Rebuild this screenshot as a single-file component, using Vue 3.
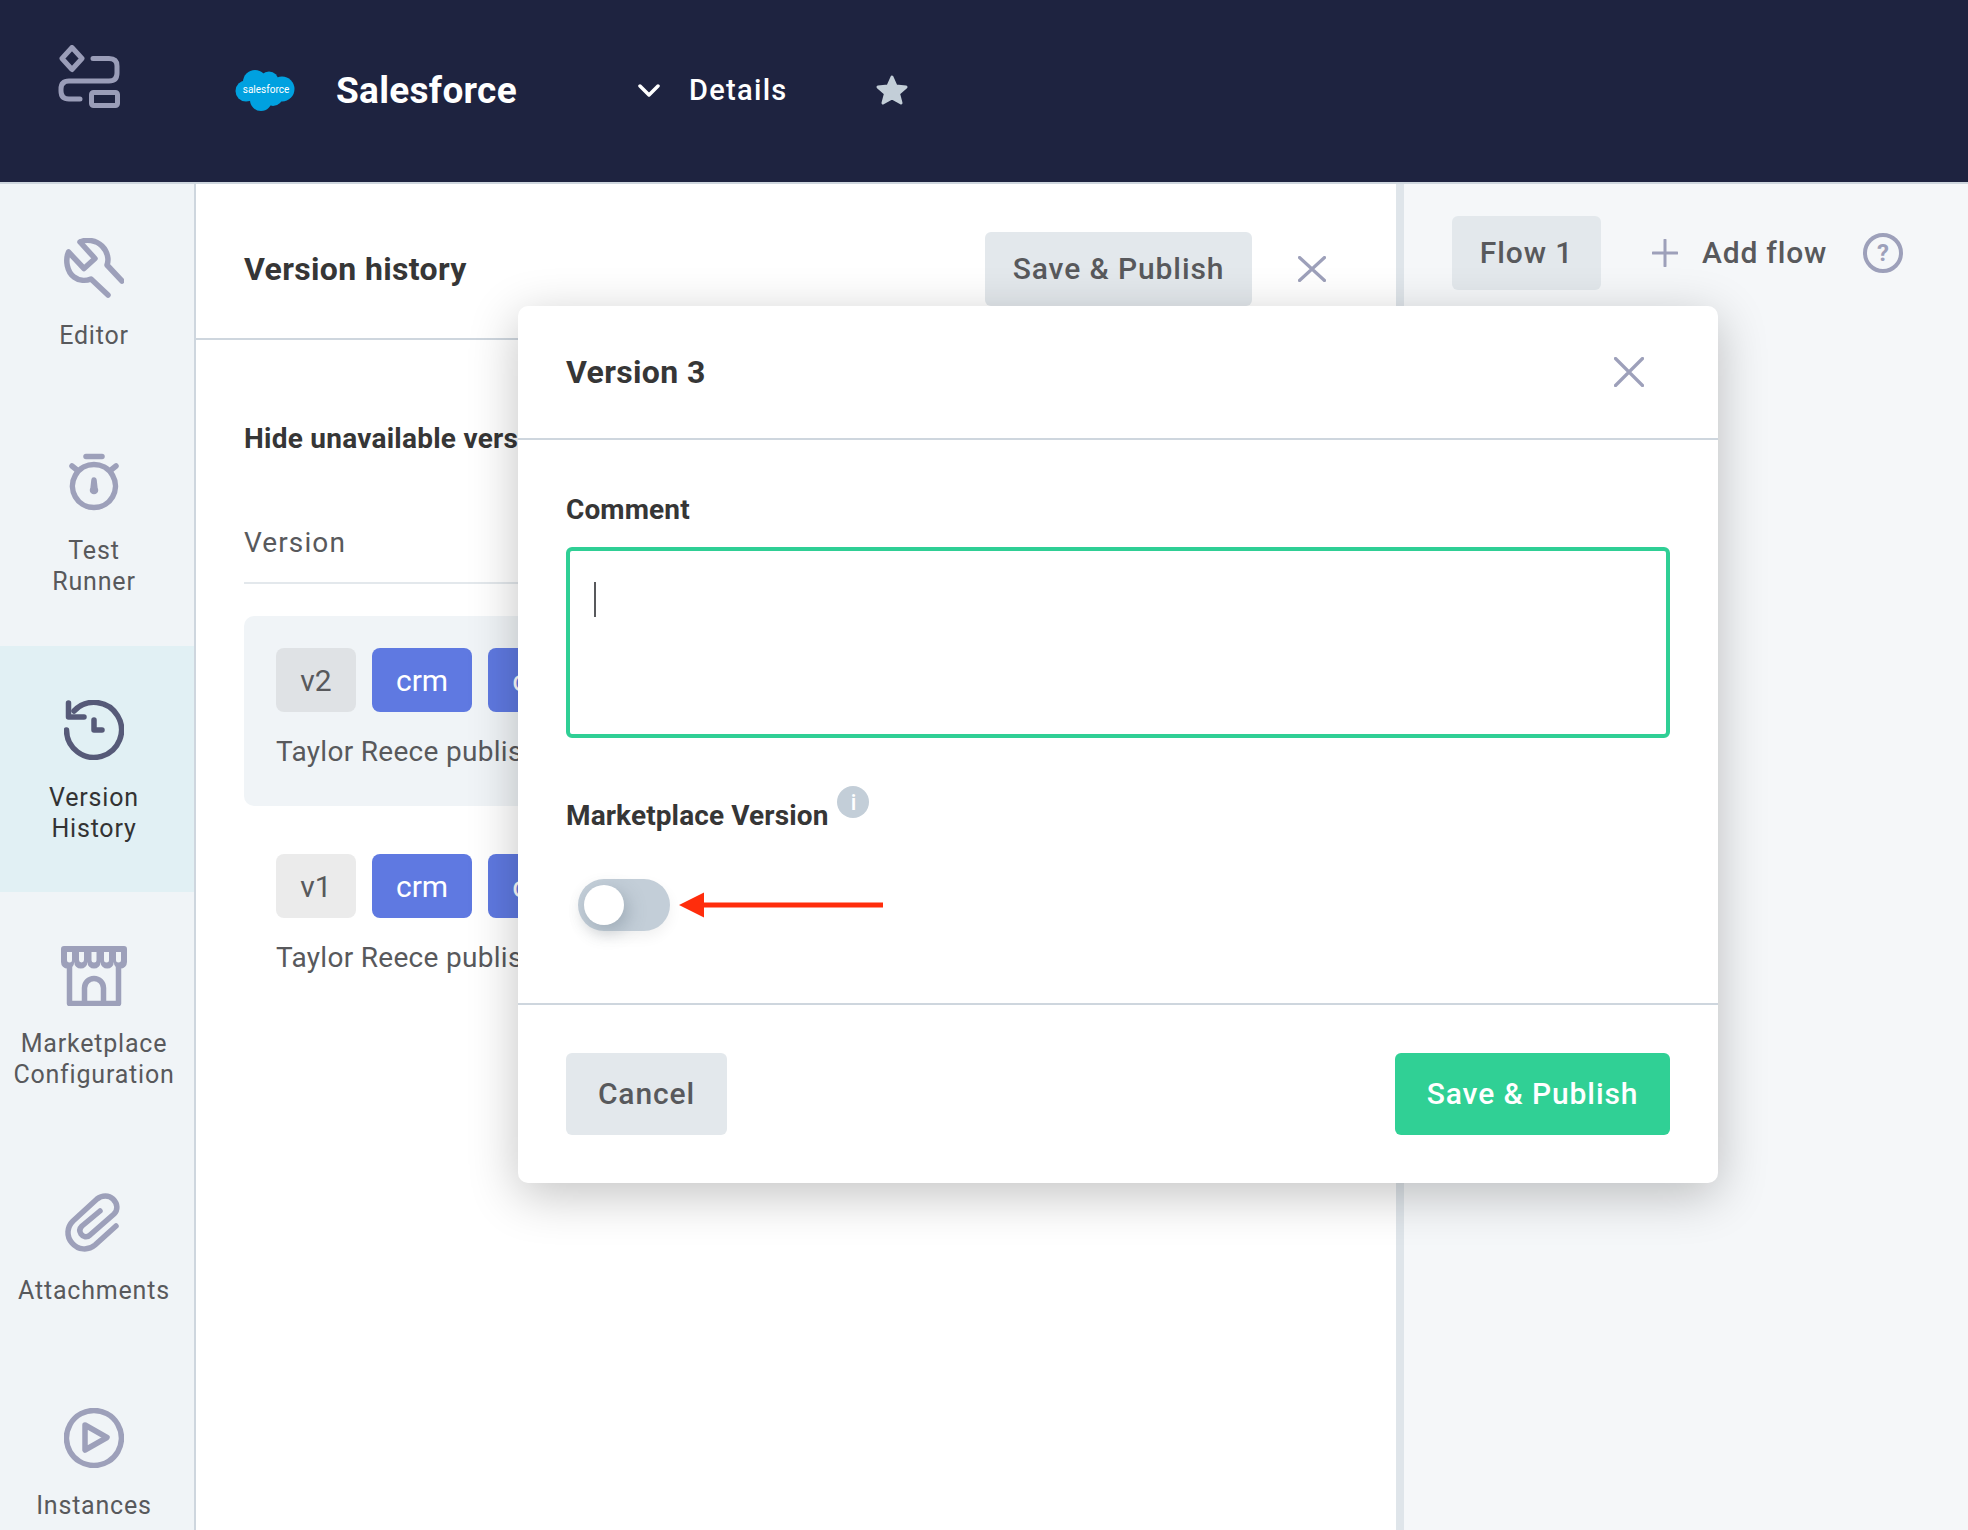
<script setup>
const navItems = [
  {
    lines: ['Editor'],
    paths: ['M16 4 L31 20.5 L20 30.5 L4.5 14 C1 22 3 34 10 39 C15 43 22 43 27 41 L44 57 M16 4 C22 1 32 2 38 8 C44 14 45 22 43 27 L58 43']
  },
  {
    lines: ['Test', 'Runner'],
    paths: ['M22 3.5 H38', 'M30 11.5 A21.5 21.5 0 1 1 29.9 11.5 Z', 'M8 13 L13 17', 'M52 13 L47 17', 'M30 27 L31 36 A1.5 1.5 0 1 1 29 36 Z']
  },
  {
    lines: ['Version', 'History'],
    active: true,
    paths: ['M2.5 30 A27.5 27.5 0 1 0 10 11', 'M4.5 3 V17 H20', 'M30 20 V30 H38']
  },
  {
    lines: ['Marketplace', 'Configuration'],
    store: true
  },
  {
    lines: ['Attachments'],
    paths: ['M52 33 L31 52 C24 58 14 57 8 50 C2 43 3 34 9 28 L33 6 C38 2 45 2 49 6 C54 11 54 17 50 21 L26 42 C23 45 19 44 17 41 C15 38 16 35 18 33 L36 18']
  },
  {
    lines: ['Instances'],
    paths: ['M30 2.5 A27.5 27.5 0 1 1 29.9 2.5 Z', 'M21 17 L43 29.5 L21 42 Z']
  }
]

const versions = [
  { tag: 'v2', selected: true },
  { tag: 'v1', selected: false }
]
</script>

<template>
  <div class="page">
    <header class="topbar">
      <svg class="app-logo" width="64" height="64" viewBox="0 0 64 64" fill="none">
        <path d="M15 2.5 L25 13.5 L15 24.5 L5 13.5 Z" />
        <path d="M36 13.5 H52 Q60 13.5 60 21 V28 Q60 36 52 36 H12 Q4 36 4 44 V46 Q4 54 12 54 H23" />
        <rect x="34.5" y="47.5" width="26" height="13" rx="2" />
      </svg>
      <svg class="sf-logo" width="60" height="41" viewBox="0 0 60 41">
        <circle cx="20" cy="12" r="12" />
        <circle cx="34" cy="11" r="9.5" />
        <circle cx="47" cy="19" r="12.5" />
        <circle cx="11" cy="21" r="10.5" />
        <circle cx="26" cy="30" r="11" />
        <circle cx="38" cy="26" r="10" />
        <rect x="12" y="10" width="34" height="20" />
        <text x="31" y="22.5" text-anchor="middle">salesforce</text>
      </svg>
      <span class="app-name">Salesforce</span>
      <svg class="chevron" width="22" height="13" viewBox="0 0 22 13" fill="none">
        <path d="M2 2 L11 11 L20 2" />
      </svg>
      <span class="details">Details</span>
      <svg class="star" width="34" height="32" viewBox="0 0 34 32">
        <path d="M17 3 L21 12 L31 13 L23.5 19.5 L26 29 L17 24 L8 29 L10.5 19.5 L3 13 L13 12 Z" />
      </svg>
    </header>

    <div class="workspace">
      <nav class="sidebar">
        <div
          v-for="item in navItems"
          :key="item.lines[0]"
          class="nav-item"
          :class="{ active: item.active }"
        >
          <svg v-if="item.store" class="nav-icon store" width="66" height="60" viewBox="0 0 66 60" fill="none">
            <path class="store-roof" d="M3 0 H63 Q66 0 66 3 V16 a6.6 6.6 0 0 1 -13.2 0 a6.6 6.6 0 0 1 -13.2 0 a6.6 6.6 0 0 1 -13.2 0 a6.6 6.6 0 0 1 -13.2 0 a6.6 6.6 0 0 1 -13.2 0 V3 Q0 0 3 0 Z" />
            <path class="store-slit" d="M6 6 h5 v8 a2.5 2.5 0 0 1 -5 0 z M18 6 h5 v8 a2.5 2.5 0 0 1 -5 0 z M30.5 6 h5 v8 a2.5 2.5 0 0 1 -5 0 z M43 6 h5 v8 a2.5 2.5 0 0 1 -5 0 z M55 6 h5 v8 a2.5 2.5 0 0 1 -5 0 z" />
            <path d="M8.5 20 V57.5 H57.5 V20" />
            <path d="M23.5 57 V42 A9.5 9.5 0 0 1 42.5 42 V57" />
          </svg>
          <svg v-else class="nav-icon" width="60" height="60" viewBox="0 0 60 60" fill="none">
            <path v-for="(d, i) in item.paths" :key="i" :d="d" />
          </svg>
          <div class="nav-label">
            <span v-for="line in item.lines" :key="line">{{ line }}</span>
          </div>
        </div>
      </nav>

      <main class="history">
        <div class="history-head">
          <h2>Version history</h2>
          <button class="btn btn-grey head-btn">Save &amp; Publish</button>
          <svg class="close" width="28" height="26" viewBox="0 0 28 26" fill="none">
            <path d="M1.5 1.5 L26.5 24.5 M26.5 1.5 L1.5 24.5" />
          </svg>
        </div>
        <div class="history-body">
          <div class="hide-toggle">Hide unavailable versions</div>
          <div class="col-head">Version</div>
          <div
            v-for="version in versions"
            :key="version.tag"
            class="version-card"
            :class="{ selected: version.selected }"
          >
            <div class="badges">
              <span class="badge badge-version">{{ version.tag }}</span>
              <span class="badge badge-tag">crm</span>
              <span class="badge badge-tag">cloud</span>
            </div>
            <div class="published">Taylor Reece published this version</div>
          </div>
        </div>
      </main>

      <aside class="flows">
        <button class="btn btn-grey flow-tab">Flow 1</button>
        <svg class="plus" width="26" height="28" viewBox="0 0 26 28" fill="none">
          <path d="M13 1 V27 M1 14 H25" />
        </svg>
        <span class="add-flow">Add flow</span>
        <span class="help">?</span>
      </aside>
    </div>

    <section class="modal">
      <div class="modal-head">
        <h3>Version 3</h3>
        <svg class="close" width="30" height="30" viewBox="0 0 30 30" fill="none">
          <path d="M1.5 1.5 L28.5 28.5 M28.5 1.5 L1.5 28.5" />
        </svg>
      </div>
      <div class="modal-body">
        <div class="field-label">Comment</div>
        <div class="comment-box"><span class="caret"></span></div>
        <div class="market-row">
          <div class="field-label">Marketplace Version</div>
          <span class="info">i</span>
        </div>
        <div class="toggle-row">
          <div class="toggle"><span class="knob"></span></div>
          <svg class="arrow" width="204" height="26" viewBox="0 0 204 26">
            <path d="M0 13 L25 0.5 V10.5 H204 V15.5 H25 V25.5 Z" />
          </svg>
        </div>
      </div>
      <div class="modal-foot">
        <button class="btn btn-grey cancel">Cancel</button>
        <button class="btn btn-green publish">Save &amp; Publish</button>
      </div>
    </section>
  </div>
</template>

<style scoped>
.page {
  position: relative;
  height: 1530px;
  overflow: hidden;
  display: flex;
  flex-direction: column;
  font-family: Roboto, "Liberation Sans", sans-serif;
  color: #363636;
}

/* top bar */
.topbar {
  height: 184px;
  flex: none;
  display: flex;
  align-items: center;
  background: #1e2340;
  border-bottom: 2px solid #ced6de;
  box-sizing: border-box;
  padding: 0 0 2px 57px;
}
.app-logo {
  margin-top: -26px;
  margin-right: 114px;
  stroke: #9a9db8;
  stroke-width: 5;
  stroke-linecap: round;
  stroke-linejoin: round;
}
.sf-logo {
  fill: #00a1e0;
}
.sf-logo text {
  fill: #fff;
  font-size: 10px;
  font-family: Roboto, sans-serif;
}
.app-name {
  margin-left: 41px;
  width: 302px;
  font-size: 37px;
  font-weight: 700;
  letter-spacing: 0.3px;
  color: #fff;
}
.chevron {
  stroke: #fff;
  stroke-width: 3.5;
  stroke-linecap: round;
  stroke-linejoin: round;
}
.details {
  margin-left: 29px;
  width: 186px;
  font-size: 29px;
  font-weight: 500;
  color: #fff;
  letter-spacing: 1.3px;
}
.star {
  fill: #c3ced8;
  stroke: #c3ced8;
  stroke-width: 3;
  stroke-linejoin: round;
}

/* layout under the bar */
.workspace {
  flex: 1;
  display: flex;
  min-height: 0;
}
.sidebar {
  width: 194px;
  flex: none;
  background: #f0f4f7;
  border-right: 2px solid #ced6de;
}
.nav-item {
  display: flex;
  flex-direction: column;
  align-items: center;
  padding: 54px 6px 48.4px 0;
}
.nav-icon {
  stroke: #9da0ba;
  stroke-width: 5.5;
  stroke-linecap: round;
  stroke-linejoin: round;
}
.nav-label {
  margin-top: 22px;
  font-size: 25px;
  line-height: 31px;
  letter-spacing: 0.8px;
  text-align: center;
  color: #58595c;
}
.nav-label span {
  display: block;
}
.nav-item.active {
  background: #e1f0f4;
}
.nav-item.active .nav-icon {
  stroke: #565a78;
}
.nav-item.active .nav-label {
  color: #333;
}
.store-roof {
  fill: #9da0ba;
  stroke: none;
}
.store-slit {
  fill: #f0f4f7;
  stroke: none;
}

/* version history panel */
.history {
  flex: 1;
  min-width: 0;
  background: #fff;
  border-right: 8px solid #dfe5ea;
}
.history-head {
  height: 156px;
  box-sizing: border-box;
  display: flex;
  align-items: center;
  padding: 16px 70px 0 48px;
  border-bottom: 2px solid #ced6de;
}
.history-head h2 {
  flex: 1;
  margin: 0;
  font-size: 32px;
  font-weight: 700;
  letter-spacing: 0.35px;
}
.head-btn {
  width: 267px;
  height: 74px;
  margin-right: 46px;
}
.close {
  flex: none;
  stroke: #9da0ba;
  stroke-width: 3.2;
  stroke-linecap: round;
}
.history-body {
  padding: 0 48px;
}
.hide-toggle {
  margin-top: 82px;
  font-size: 28px;
  font-weight: 700;
  line-height: 34px;
  letter-spacing: 0.25px;
}
.col-head {
  margin-top: 68px;
  padding-bottom: 20px;
  font-size: 28px;
  line-height: 38px;
  letter-spacing: 1.1px;
  color: #58595c;
  border-bottom: 2px solid #e3e8ec;
}
.version-card {
  margin-top: 32px;
  height: 190px;
  padding: 32px;
  box-sizing: border-box;
  border-radius: 10px;
}
.version-card + .version-card {
  margin-top: 16px;
}
.version-card.selected {
  background: #f0f4f7;
}
.badges {
  display: flex;
  gap: 16px;
}
.badge {
  display: flex;
  align-items: center;
  justify-content: center;
  height: 64px;
  padding: 0 24px;
  box-sizing: border-box;
  border-radius: 8px;
  font-size: 30px;
}
.badge-version {
  min-width: 80px;
  background: #ebebeb;
  color: #58595c;
}
.selected .badge-version {
  background: #dfe2e5;
}
.badge-tag {
  background: #5f79e1;
  color: #fff;
}
.published {
  margin-top: 20px;
  font-size: 28px;
  line-height: 40px;
  letter-spacing: 0.3px;
  color: #58595c;
  white-space: nowrap;
}

/* flow tabs on the right */
.flows {
  width: 564px;
  flex: none;
  display: flex;
  align-items: flex-start;
  padding: 32px 0 0 48px;
  box-sizing: border-box;
  background: #f5f7f9;
}
.flow-tab {
  width: 149px;
  height: 74px;
}
.plus {
  margin: 23px 0 0 51px;
  stroke: #9da0ba;
  stroke-width: 3;
  stroke-linecap: round;
}
.add-flow {
  margin: 17px 0 0 24px;
  font-size: 30px;
  line-height: 40px;
  font-weight: 500;
  letter-spacing: 0.8px;
  color: #58595c;
}
.help {
  margin: 17px 0 0 36px;
  width: 40px;
  height: 40px;
  box-sizing: border-box;
  border: 4px solid #9da0ba;
  border-radius: 50%;
  display: flex;
  align-items: center;
  justify-content: center;
  font-size: 24px;
  font-weight: 700;
  color: #9da0ba;
}

/* buttons */
.btn {
  display: block;
  padding: 0 0 2px;
  border: none;
  border-radius: 6px;
  font-family: inherit;
  font-size: 30px;
  font-weight: 500;
  letter-spacing: 0.9px;
}
.btn-grey {
  background: #e3e8ec;
  color: #58595c;
}
.btn-green {
  background: #30d095;
  color: #fff;
}

/* modal over the panels */
.modal {
  position: absolute;
  left: 518px;
  top: 306px;
  width: 1200px;
  height: 877px;
  display: flex;
  flex-direction: column;
  background: #fff;
  border-radius: 10px;
  box-shadow: 0 12px 50px rgba(0, 0, 0, 0.24);
}
.modal-head {
  height: 132px;
  flex: none;
  display: flex;
  align-items: center;
  justify-content: space-between;
  padding: 0 74px 0 48px;
  border-bottom: 2px solid #ced6de;
}
.modal-head h3 {
  margin: 0;
  font-size: 32px;
  font-weight: 700;
  letter-spacing: 0.35px;
}
.modal-body {
  flex: 1;
  padding: 53px 48px 0;
}
.field-label {
  font-size: 28px;
  font-weight: 700;
  line-height: 34px;
  letter-spacing: 0.12px;
}
.comment-box {
  margin-top: 20px;
  height: 191px;
  padding: 31px 24px;
  box-sizing: border-box;
  border: 4px solid #2fcf95;
  border-radius: 6px;
}
.caret {
  display: block;
  width: 2px;
  height: 35px;
  background: #58595c;
}
.market-row {
  margin-top: 48px;
  display: flex;
  align-items: flex-start;
  gap: 9px;
}
.market-row .field-label {
  margin-top: 13px;
}
.info {
  width: 32px;
  height: 32px;
  border-radius: 50%;
  display: flex;
  align-items: center;
  justify-content: center;
  background: #c3ced8;
  color: #fff;
  font-size: 22px;
  font-weight: 500;
}
.toggle-row {
  margin: 46px 0 0 12px;
  display: flex;
  align-items: center;
  gap: 9px;
}
.toggle {
  width: 92px;
  height: 52px;
  padding: 6px;
  box-sizing: border-box;
  border-radius: 26px;
  background: #c3ced8;
  box-shadow: 0 6px 14px rgba(0, 0, 0, 0.06);
}
.knob {
  display: block;
  width: 40px;
  height: 40px;
  border-radius: 50%;
  background: #fff;
  box-shadow: 4px 6px 18px rgba(90, 105, 120, 0.35);
}
.arrow {
  fill: #ff2d0c;
}
.modal-foot {
  height: 178px;
  flex: none;
  display: flex;
  align-items: center;
  justify-content: space-between;
  padding: 0 48px;
  border-top: 2px solid #ced6de;
}
.cancel {
  width: 161px;
  height: 82px;
}
.publish {
  width: 275px;
  height: 82px;
}
</style>

<style>
html,
body {
  margin: 0;
  overflow: hidden;
}
</style>
